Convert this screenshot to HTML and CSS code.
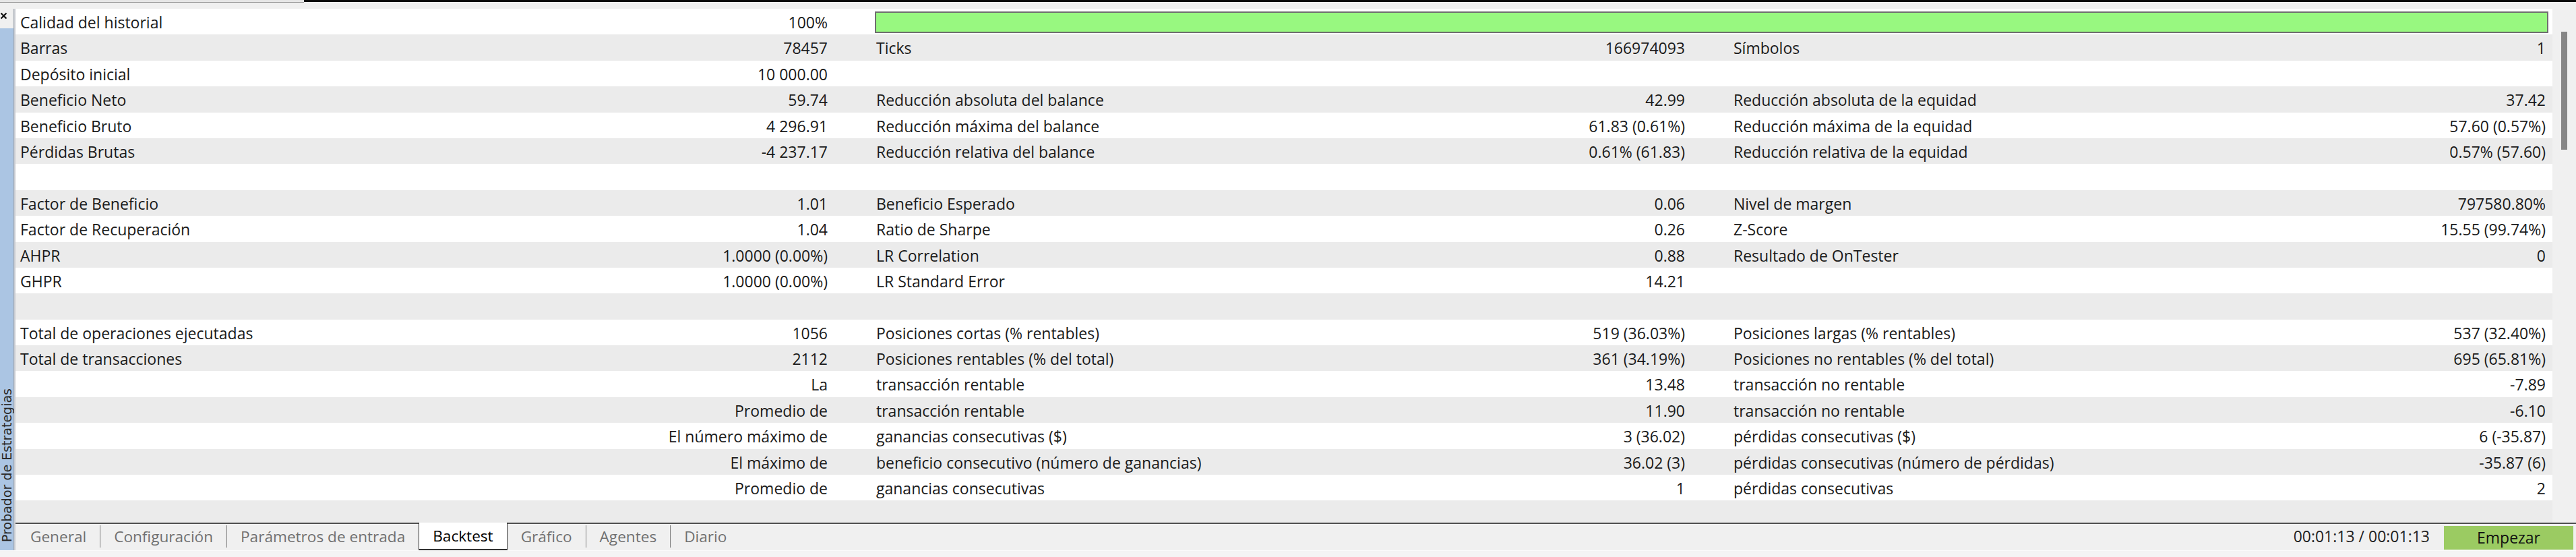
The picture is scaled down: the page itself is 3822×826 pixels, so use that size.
FILE: index.html
```html
<!DOCTYPE html>
<html lang="es">
<head>
<meta charset="utf-8">
<title>Probador de Estrategias - Backtest</title>
<link rel="stylesheet" href="styles.css">
</head>
<body>
<div class="app">
  <div class="topbar"><div class="topbar-tab"></div><div class="topbar-dark"></div></div>
  <div class="middle">
    <div class="side">
      <div class="close"><svg width="11" height="11" viewBox="0 0 11 11"><path d="M1.5 1.5 L9.5 9.5 M9.5 1.5 L1.5 9.5" stroke="#111" stroke-width="2.2" fill="none"/></svg></div>
      <div class="side-label"><span>Probador de Estrategias</span></div>
    </div>
    <div class="divider"></div>
    <div class="panel">
      <div class="report">
        <div class="rows">
          <div class="row"><div class="grp"><span>Calidad del historial</span><span>100%</span></div><div class="quality"></div></div>
          <div class="row"><div class="grp"><span>Barras</span><span>78457</span></div><div class="grp"><span>Ticks</span><span>166974093</span></div><div class="grp"><span>Símbolos</span><span>1</span></div></div>
          <div class="row"><div class="grp"><span>Depósito inicial</span><span>10 000.00</span></div><div class="grp"></div><div class="grp"></div></div>
          <div class="row"><div class="grp"><span>Beneficio Neto</span><span>59.74</span></div><div class="grp"><span>Reducción absoluta del balance</span><span>42.99</span></div><div class="grp"><span>Reducción absoluta de la equidad</span><span>37.42</span></div></div>
          <div class="row"><div class="grp"><span>Beneficio Bruto</span><span>4 296.91</span></div><div class="grp"><span>Reducción máxima del balance</span><span>61.83 (0.61%)</span></div><div class="grp"><span>Reducción máxima de la equidad</span><span>57.60 (0.57%)</span></div></div>
          <div class="row"><div class="grp"><span>Pérdidas Brutas</span><span>-4 237.17</span></div><div class="grp"><span>Reducción relativa del balance</span><span>0.61% (61.83)</span></div><div class="grp"><span>Reducción relativa de la equidad</span><span>0.57% (57.60)</span></div></div>
          <div class="row"></div>
          <div class="row"><div class="grp"><span>Factor de Beneficio</span><span>1.01</span></div><div class="grp"><span>Beneficio Esperado</span><span>0.06</span></div><div class="grp"><span>Nivel de margen</span><span>797580.80%</span></div></div>
          <div class="row"><div class="grp"><span>Factor de Recuperación</span><span>1.04</span></div><div class="grp"><span>Ratio de Sharpe</span><span>0.26</span></div><div class="grp"><span>Z-Score</span><span>15.55 (99.74%)</span></div></div>
          <div class="row"><div class="grp"><span>AHPR</span><span>1.0000 (0.00%)</span></div><div class="grp"><span>LR Correlation</span><span>0.88</span></div><div class="grp"><span>Resultado de OnTester</span><span>0</span></div></div>
          <div class="row"><div class="grp"><span>GHPR</span><span>1.0000 (0.00%)</span></div><div class="grp"><span>LR Standard Error</span><span>14.21</span></div><div class="grp"></div></div>
          <div class="row"></div>
          <div class="row"><div class="grp"><span>Total de operaciones ejecutadas</span><span>1056</span></div><div class="grp"><span>Posiciones cortas (% rentables)</span><span>519 (36.03%)</span></div><div class="grp"><span>Posiciones largas (% rentables)</span><span>537 (32.40%)</span></div></div>
          <div class="row"><div class="grp"><span>Total de transacciones</span><span>2112</span></div><div class="grp"><span>Posiciones rentables (% del total)</span><span>361 (34.19%)</span></div><div class="grp"><span>Posiciones no rentables (% del total)</span><span>695 (65.81%)</span></div></div>
          <div class="row"><div class="grp"><span></span><span>La</span></div><div class="grp"><span>transacción rentable</span><span>13.48</span></div><div class="grp"><span>transacción no rentable</span><span>-7.89</span></div></div>
          <div class="row"><div class="grp"><span></span><span>Promedio de</span></div><div class="grp"><span>transacción rentable</span><span>11.90</span></div><div class="grp"><span>transacción no rentable</span><span>-6.10</span></div></div>
          <div class="row"><div class="grp"><span></span><span>El número máximo de</span></div><div class="grp"><span>ganancias consecutivas ($)</span><span>3 (36.02)</span></div><div class="grp"><span>pérdidas consecutivas ($)</span><span>6 (-35.87)</span></div></div>
          <div class="row"><div class="grp"><span></span><span>El máximo de</span></div><div class="grp"><span>beneficio consecutivo (número de ganancias)</span><span>36.02 (3)</span></div><div class="grp"><span>pérdidas consecutivas (número de pérdidas)</span><span>-35.87 (6)</span></div></div>
          <div class="row"><div class="grp"><span></span><span>Promedio de</span></div><div class="grp"><span>ganancias consecutivas</span><span>1</span></div><div class="grp"><span>pérdidas consecutivas</span><span>2</span></div></div>
          <div class="row"></div>
        </div>
        <div class="vscroll"><div class="thumb"></div></div>
      </div>
      <div class="tabbar">
        <div class="tabs">
          <div class="tab">General</div>
          <div class="sep"></div>
          <div class="tab">Configuración</div>
          <div class="sep"></div>
          <div class="tab">Parámetros de entrada</div>
          <div class="tab active">Backtest</div>
          <div class="tab">Gráfico</div>
          <div class="sep"></div>
          <div class="tab">Agentes</div>
          <div class="sep"></div>
          <div class="tab">Diario</div>
        </div>
        <div class="status">00:01:13 / 00:01:13</div>
        <div class="start">Empezar</div>
      </div>
    </div>
  </div>
  <div class="footer"></div>
</div>
</body>
</html>
```

FILE: styles.css
```css
html, body {
  margin: 0;
  padding: 0;
}
body {
  width: 3822px;
  height: 826px;
  overflow: hidden;
  background: #f0f0f0;
  font-family: "Open Sans", "Noto Sans", sans-serif;
  font-size: 23px;
  color: #1a1a1a;
}
.app {
  display: flex;
  flex-direction: column;
  width: 3822px;
  height: 826px;
}
.topbar {
  height: 13px;
  display: flex;
  background: #f0f0f0;
}
.topbar-tab {
  width: 451px;
  height: 3px;
  background: #e6e6e6;
  border-bottom: 1px solid #9a9a9a;
}
.topbar-dark {
  flex: 1;
  height: 3px;
  background: #0a0a0a;
}
.middle {
  height: 803px;
  display: flex;
}
.side {
  width: 20px;
  display: flex;
  flex-direction: column;
}
.close {
  height: 29px;
  display: flex;
  align-items: flex-start;
  padding-top: 5px;
  box-sizing: border-box;
  background: #f0f0f0;
}
.side-label {
  flex: 1;
  background: #abc5e3;
  display: flex;
  align-items: flex-end;
  justify-content: center;
  padding-bottom: 12px;
}
.side-label span {
  writing-mode: vertical-rl;
  transform: rotate(180deg);
  font-family: "DejaVu Sans", Verdana, sans-serif;
  font-size: 19px;
  line-height: 20px;
  color: #2a2a2a;
  white-space: nowrap;
}
.divider {
  width: 3px;
  background: #c9ccd2;
  border-left: 1px solid #9fa6b0;
  box-sizing: border-box;
}
.panel {
  flex: 1;
  display: flex;
  flex-direction: column;
}
.report {
  height: 762px;
  display: flex;
  overflow: hidden;
}
.rows {
  width: 3764px;
  overflow: hidden;
}
.row {
  height: 38.4px;
  display: grid;
  grid-template-columns: 1198px 1200px 1205px;
  column-gap: 72px;
  padding-left: 7px;
  background: #ffffff;
  line-height: 38.4px;
  white-space: nowrap;
}
.row:nth-child(even) {
  background: #ebebeb;
}
.grp {
  display: flex;
  justify-content: space-between;
  padding-top: 1px;
}
.quality {
  grid-column: 2 / 4;
  margin: 4px -4px 3px -2px;
  background: #98f880;
  border: 2px solid #6f6f6f;
  box-sizing: border-box;
}
.vscroll {
  flex: 1;
  background: #f0f0f0;
  display: flex;
  justify-content: center;
  padding-top: 34px;
}
.thumb {
  width: 9px;
  height: 175px;
  background: #868686;
}
.tabbar {
  height: 41px;
  display: flex;
  align-items: stretch;
  border-top: 2px solid #505050;
  box-sizing: border-box;
  background: #f0f0f0;
  padding-left: 2px;
}
.tabs {
  display: flex;
  align-items: stretch;
  flex: 1;
  font-size: 22.6px;
}
.tab {
  padding: 0 20px;
  color: #707070;
  line-height: 37px;
  white-space: nowrap;
}
.tab.active {
  color: #000;
  background: #ffffff;
  border: 1px solid #333;
  border-top: 0;
  border-bottom-width: 2px;
  margin-top: -2px;
  padding-top: 2px;
  line-height: 35px;
}
.sep {
  width: 1px;
  margin: 2px 0 4px;
  background: #7a7a7a;
}
.status {
  line-height: 37px;
  color: #222;
  margin-right: 21px;
  white-space: nowrap;
}
.start {
  width: 192px;
  margin: 3px 4px 1px 0;
  background: #9bcb62;
  color: #111;
  text-align: center;
  line-height: 34px;
}
.footer {
  height: 10px;
  background: #f4f4f4;
  border-top: 1px solid #fbfbfb;
  box-sizing: border-box;
}
```
